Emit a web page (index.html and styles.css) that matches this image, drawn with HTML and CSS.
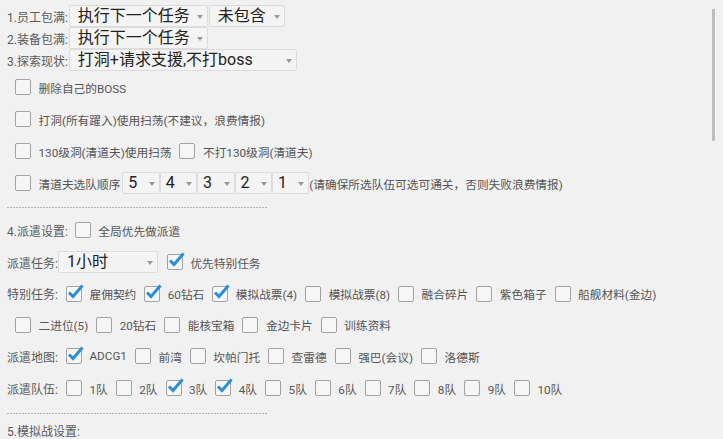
FILE: index.html
```html
<!DOCTYPE html>
<html lang="zh-CN">
<head>
  <meta charset="UTF-8">
  <title>设置</title>
  <link rel="stylesheet" href="styles.css">
</head>
<body>
<div class="page">

  <div class="row sel-row">
    <span class="label">1.员工包满:</span>
    <div class="dropdown w139">执行下一个任务</div>
    <div class="dropdown w76">未包含</div>
  </div>
  <div class="row sel-row">
    <span class="label">2.装备包满:</span>
    <div class="dropdown w139">执行下一个任务</div>
  </div>
  <div class="row sel-row">
    <span class="label">3.探索现状:</span>
    <div class="dropdown w228">打洞+请求支援,不打boss</div>
  </div>

  <div class="row indent">
    <label class="check"><span class="box"></span>删除自己的BOSS</label>
  </div>
  <div class="row indent">
    <label class="check"><span class="box"></span>打洞(所有躍入)使用扫荡(不建议，浪费情报)</label>
  </div>
  <div class="row indent">
    <label class="check"><span class="box"></span>130级洞(清道夫)使用扫荡</label>
    <label class="check"><span class="box"></span>不打130级洞(清道夫)</label>
  </div>
  <div class="row indent">
    <label class="check tight"><span class="box"></span>清道夫选队顺序</label>
    <div class="dropdown small">5</div>
    <div class="dropdown small">4</div>
    <div class="dropdown small">3</div>
    <div class="dropdown small">2</div>
    <div class="dropdown small">1</div>
    <span class="note">(请确保所选队伍可选可通关，否则失败浪费情报)</span>
  </div>

  <div class="sep first"></div>

  <div class="row">
    <span class="label gap">4.派遣设置:</span>
    <label class="check"><span class="box"></span>全局优先做派遣</label>
  </div>
  <div class="row">
    <span class="label">派遣任务:</span>
    <div class="dropdown w100">1小时</div>
    <label class="check wide"><span class="box on"><svg viewBox="0 0 20 20"><polyline points="4,9.5 8,13.5 17.5,2.5"/></svg></span>优先特别任务</label>
  </div>
  <div class="row short">
    <span class="label fixed">特别任务:</span>
    <label class="check"><span class="box on"><svg viewBox="0 0 20 20"><polyline points="4,9.5 8,13.5 17.5,2.5"/></svg></span>雇佣契约</label>
    <label class="check"><span class="box on"><svg viewBox="0 0 20 20"><polyline points="4,9.5 8,13.5 17.5,2.5"/></svg></span>60钻石</label>
    <label class="check"><span class="box on"><svg viewBox="0 0 20 20"><polyline points="4,9.5 8,13.5 17.5,2.5"/></svg></span>模拟战票(4)</label>
    <label class="check"><span class="box"></span>模拟战票(8)</label>
    <label class="check"><span class="box"></span>融合碎片</label>
    <label class="check"><span class="box"></span>紫色箱子</label>
    <label class="check"><span class="box"></span>船舰材料(金边)</label>
  </div>
  <div class="row short indent">
    <label class="check"><span class="box"></span>二进位(5)</label>
    <label class="check"><span class="box"></span>20钻石</label>
    <label class="check"><span class="box"></span>能核宝箱</label>
    <label class="check"><span class="box"></span>金边卡片</label>
    <label class="check"><span class="box"></span>训练资料</label>
  </div>
  <div class="row">
    <span class="label fixed">派遣地图:</span>
    <label class="check"><span class="box on"><svg viewBox="0 0 20 20"><polyline points="4,9.5 8,13.5 17.5,2.5"/></svg></span>ADCG1</label>
    <label class="check"><span class="box"></span>前湾</label>
    <label class="check"><span class="box"></span>坎帕门托</label>
    <label class="check"><span class="box"></span>查雷德</label>
    <label class="check"><span class="box"></span>强巴(会议)</label>
    <label class="check"><span class="box"></span>洛德斯</label>
  </div>
  <div class="row teams">
    <span class="label fixed">派遣队伍:</span>
    <label class="check"><span class="box"></span>1队</label>
    <label class="check"><span class="box"></span>2队</label>
    <label class="check"><span class="box on"><svg viewBox="0 0 20 20"><polyline points="4,9.5 8,13.5 17.5,2.5"/></svg></span>3队</label>
    <label class="check"><span class="box on"><svg viewBox="0 0 20 20"><polyline points="4,9.5 8,13.5 17.5,2.5"/></svg></span>4队</label>
    <label class="check"><span class="box"></span>5队</label>
    <label class="check"><span class="box"></span>6队</label>
    <label class="check"><span class="box"></span>7队</label>
    <label class="check"><span class="box"></span>8队</label>
    <label class="check"><span class="box"></span>9队</label>
    <label class="check"><span class="box"></span>10队</label>
  </div>

  <div class="sep second"></div>

  <div class="row">
    <span class="label">5.模拟战设置:</span>
  </div>

</div>
<div class="scrollbar"></div>
</body>
</html>
```

FILE: styles.css
```css
* {
  margin: 0;
  padding: 0;
  box-sizing: border-box;
}

body {
  font-family: 'Roboto', 'Noto Sans CJK SC', sans-serif;
  font-size: 11.7px;
  background-color: #f1f1f1;
  color: #555;
  overflow: hidden;
}

.page {
  padding: 5px 0 0 7px;
}

.row {
  display: flex;
  align-items: center;
  height: 32px;
  white-space: nowrap;
}

.row.short {
  height: 31px;
}

.sel-row {
  height: 22px;
}

.indent {
  padding-left: 8px;
}

.label {
  color: #5a5a5a;
  font-size: 12px;
}

.label.fixed {
  width: 59px;
}

.label.gap {
  margin-right: 7px;
}

.dropdown {
  position: relative;
  height: 22px;
  line-height: 20px;
  padding-left: 8px;
  font-size: 16px;
  color: #222;
  background-color: #f4f4f4;
  border: 1px solid #dcdcdc;
  border-radius: 2px;
}

.dropdown::after {
  content: '';
  position: absolute;
  right: 4px;
  top: 9px;
  border-left: 3.5px solid transparent;
  border-right: 3.5px solid transparent;
  border-top: 4px solid #999;
}

.sel-row .dropdown {
  margin-left: 1px;
}

.w139 { width: 139px; }
.w76 { width: 76px; }
.w228 { width: 228px; }
.w100 { width: 100px; }

.dropdown.small {
  width: 37.4px;
  padding-left: 5px;
}

.check {
  display: flex;
  align-items: center;
  margin-right: 8px;
}

.check.tight {
  margin-right: 2px;
}

.check.wide {
  margin-left: 9px;
}

.box {
  position: relative;
  width: 16px;
  height: 16px;
  margin-right: 7.5px;
  border: 1.5px solid #a2a2a2;
  border-radius: 2px;
  background-color: #f6f6f6;
}

.box svg {
  position: absolute;
  left: -2px;
  top: -4px;
  width: 20px;
  height: 20px;
  overflow: visible;
}

.box polyline {
  fill: none;
  stroke: #2b8fd6;
  stroke-width: 3;
}

.note {
  color: #555;
}

.sep {
  width: 261px;
  height: 1px;
  background-image: repeating-linear-gradient(to right, #b3b3b3 0 2px, transparent 2px 3px);
}

.sep.first {
  margin: 8px 0 6px;
}

.sep.second {
  margin-top: 9px;
}

.scrollbar {
  position: fixed;
  top: 9px;
  right: 8px;
  width: 3px;
  height: 132px;
  background-color: #bdbdbd;
  border-radius: 1px;
}
```
